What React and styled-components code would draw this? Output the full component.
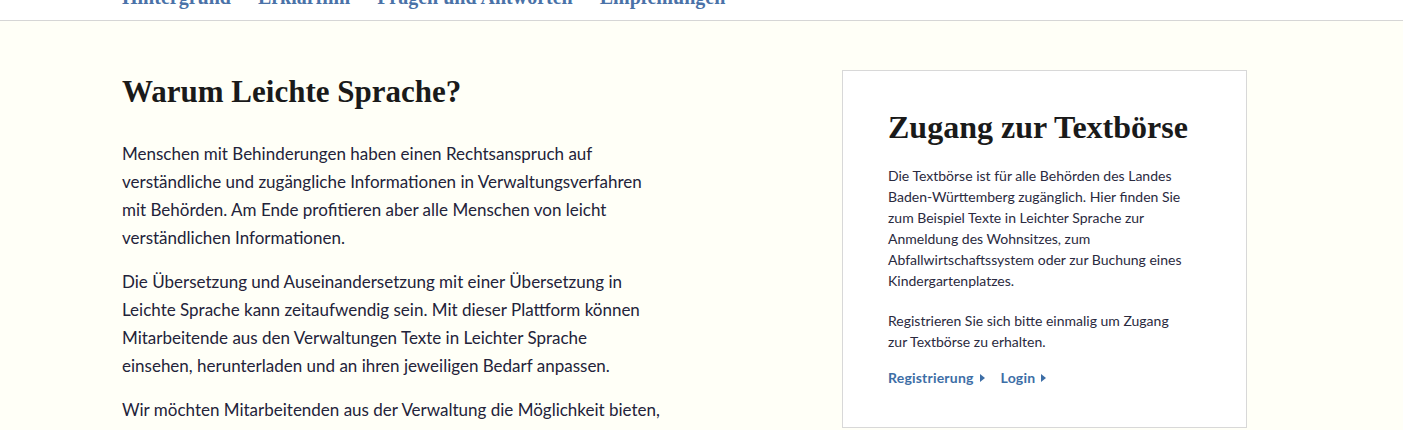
import React from "react";
import styled, { createGlobalStyle } from "styled-components";

const Global = createGlobalStyle`
  html, body { margin: 0; padding: 0; }
  body { background: #fffff7; font-family: Lato, "Noto Sans", sans-serif; }
`;

const Nav = styled.nav`
  height: 20px;
  background: #fff;
  border-bottom: 1px solid #d6d6d6;
  overflow: hidden;
  display: flex;
  align-items: flex-end;
  padding-left: 122px;
`;

const NavList = styled.ul`
  display: flex;
  gap: 27px;
  margin: 0 0 13px 0;
  padding: 0;
  list-style: none;
`;

const NavLink = styled.a`
  font-family: "Liberation Serif", serif;
  font-weight: bold;
  font-size: 20px;
  line-height: 20px;
  color: #4a72a8;
  text-decoration: none;
  display: block;
`;

const Main = styled.main`
  display: flex;
  justify-content: space-between;
  align-items: flex-start;
  width: 1125px;
  padding: 49px 0 0 122px;
`;

const Article = styled.article`
  width: 580px;
  padding-top: 4px;
`;

const H1 = styled.h1`
  font-family: "Liberation Serif", serif;
  font-weight: bold;
  font-size: 31px;
  line-height: 36px;
  color: #1a1a1a;
  margin: 0 0 30px;
`;

const P = styled.p`
  font-size: 17px;
  line-height: 28px;
  color: #23233a;
  margin: 0 0 16px;
`;

const Box = styled.aside`
  width: 405px;
  box-sizing: border-box;
  background: #fff;
  border: 1px solid #d8d8d8;
  padding: 36px 40px 41px 45px;
`;

const H2 = styled.h2`
  font-family: "Liberation Serif", serif;
  font-weight: bold;
  font-size: 32px;
  line-height: 40px;
  color: #1a1a1a;
  margin: 0 0 18px;
`;

const BoxP = styled.p`
  font-size: 14px;
  line-height: 21px;
  color: #2a2a40;
  margin: 0 0 19px;
  &:last-of-type { margin-bottom: 0; }
`;

const Links = styled.div`
  display: flex;
  gap: 16px;
  margin-top: 17px;
`;

const LinkA = styled.a`
  font-size: 14px;
  font-weight: bold;
  letter-spacing: 0.2px;
  color: #3d6ea6;
  text-decoration: none;
  display: inline-flex;
  align-items: center;
  gap: 6px;
`;

const Arrow = () => (
  <svg width="5" height="8" viewBox="0 0 5 8" aria-hidden="true">
    <path d="M0 0 L5 4 L0 8 Z" fill="#3d6ea6" />
  </svg>
);

export default function App() {
  return (
    <>
      <Global />
      <Nav>
        <NavList>
          <li><NavLink href="#">Hintergrund</NavLink></li>
          <li><NavLink href="#">Erklärfilm</NavLink></li>
          <li><NavLink href="#">Fragen und Antworten</NavLink></li>
          <li><NavLink href="#">Empfehlungen</NavLink></li>
        </NavList>
      </Nav>
      <Main>
        <Article>
          <H1>Warum Leichte Sprache?</H1>
          <P>
            Menschen mit Behinderungen haben einen Rechtsanspruch auf<br />
            verständliche und zugängliche Informationen in Verwaltungsverfahren<br />
            mit Behörden. Am Ende profitieren aber alle Menschen von leicht<br />
            verständlichen Informationen.
          </P>
          <P>
            Die Übersetzung und Auseinandersetzung mit einer Übersetzung in<br />
            Leichte Sprache kann zeitaufwendig sein. Mit dieser Plattform können<br />
            Mitarbeitende aus den Verwaltungen Texte in Leichter Sprache<br />
            einsehen, herunterladen und an ihren jeweiligen Bedarf anpassen.
          </P>
          <P>
            Wir möchten Mitarbeitenden aus der Verwaltung die Möglichkeit bieten,<br />
            sich untereinander auszutauschen und voneinander zu lernen. Texte in<br />
            Leichter Sprache können hier geteilt werden.
          </P>
        </Article>
        <Box>
          <H2>Zugang zur Textbörse</H2>
          <BoxP>
            Die Textbörse ist für alle Behörden des Landes<br />
            Baden-Württemberg zugänglich. Hier finden Sie<br />
            zum Beispiel Texte in Leichter Sprache zur<br />
            Anmeldung des Wohnsitzes, zum<br />
            Abfallwirtschaftssystem oder zur Buchung eines<br />
            Kindergartenplatzes.
          </BoxP>
          <BoxP>
            Registrieren Sie sich bitte einmalig um Zugang<br />
            zur Textbörse zu erhalten.
          </BoxP>
          <Links>
            <LinkA href="#">Registrierung <Arrow /></LinkA>
            <LinkA href="#">Login <Arrow /></LinkA>
          </Links>
        </Box>
      </Main>
    </>
  );
}
